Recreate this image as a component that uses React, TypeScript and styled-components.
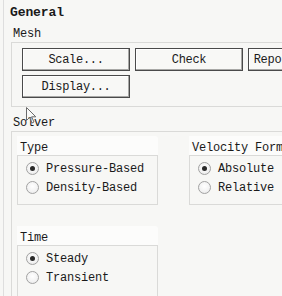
import React from 'react';
import styled, { createGlobalStyle } from 'styled-components';

const GlobalStyle = createGlobalStyle`
  html, body {
    margin: 0;
    padding: 0;
    background: #f7f7f5;
  }
`;

const Page = styled.div`
  position: relative;
  width: 282px;
  height: 296px;
  overflow: hidden;
  background: #f7f7f5;
  font-family: 'Liberation Mono', 'DejaVu Sans Mono', monospace;
  font-size: 12px;
  letter-spacing: -0.2px;
  color: #1a1a1a;
`;

const Panel = styled.div`
  width: 420px;
  min-height: 296px;
  margin-left: 3px;
  padding-left: 7px;
  border-left: 1px solid #dedede;
  box-sizing: border-box;
`;

const Title = styled.div`
  padding-top: 5px;
  margin-left: -1px;
  height: 15px;
  line-height: 15px;
  font-size: 13px;
  font-weight: bold;
  letter-spacing: -0.1px;
`;

const SectionLabel = styled.div<{ $gap: number }>`
  margin-top: ${p => p.$gap}px;
  height: 16px;
  line-height: 14px;
  padding-top: 1px;
  box-sizing: border-box;
  padding-left: 2px;
`;

const GroupBox = styled.div<{ $pad: string }>`
  border: 1px solid #dadad8;
  border-right: none;
  padding: ${p => p.$pad};
`;

const ButtonGrid = styled.div`
  display: grid;
  grid-template-columns: repeat(3, 108px);
  column-gap: 5px;
  row-gap: 4px;
`;

const Button = styled.button`
  height: 23px;
  padding: 0;
  margin: 0;
  background: #f8f8f6;
  border: 1px solid #4a4a4a;
  box-shadow: inset -1px -1px 0 #a8a8a6, inset 1px 1px 0 #ffffff;
  font-family: inherit;
  font-size: 12px;
  letter-spacing: -0.3px;
  color: #1a1a1a;
  text-align: center;
  line-height: 20px;
`;

const Columns = styled.div`
  display: flex;
  gap: 31px;
`;

const SubGroup = styled.div<{ $width?: number; $gap?: number }>`
  width: ${p => (p.$width ? `${p.$width}px` : 'auto')};
  flex: ${p => (p.$width ? 'none' : '1')};
  margin-top: ${p => p.$gap || 0}px;
`;

const SubLabel = styled.div`
  height: 19px;
  line-height: 14px;
  padding: 5px 0 0 3px;
  box-sizing: border-box;
  background: #fcfcfb;
  border-radius: 0 3px 0 0;
  white-space: nowrap;
`;

const SubBox = styled.div<{ $noRight?: boolean; $noBottom?: boolean }>`
  border: 1px solid #dadad8;
  border-right-color: ${p => (p.$noRight ? 'transparent' : '#dadad8')};
  border-bottom-color: ${p => (p.$noBottom ? 'transparent' : '#dadad8')};
  padding: ${p => (p.$noBottom ? '3px 0 20px 8px' : '3px 0 7px 8px')};
`;

const RadioRow = styled.label`
  display: flex;
  align-items: center;
  gap: 7px;
  height: 19px;
  white-space: nowrap;
`;

const RadioDot = styled.span<{ $checked: boolean }>`
  width: 11px;
  height: 11px;
  border-radius: 50%;
  border: 1px solid #a2a2a2;
  background: radial-gradient(circle at 50% 40%, #ffffff 0%, #f2f2f2 60%, #e2e2e2 100%);
  display: flex;
  align-items: center;
  justify-content: center;
  flex: none;

  &::after {
    content: '';
    display: ${p => (p.$checked ? 'block' : 'none')};
    width: 5px;
    height: 5px;
    border-radius: 50%;
    background: #2a2a2a;
  }
`;

const Cursor = styled.svg`
  position: absolute;
  left: 26px;
  top: 107px;
`;

const Radio: React.FC<{ label: string; checked?: boolean }> = ({ label, checked }) => (
  <RadioRow>
    <RadioDot $checked={!!checked} />
    {label}
  </RadioRow>
);

const App: React.FC = () => (
  <Page>
    <GlobalStyle />
    <Panel>
      <Title>General</Title>
      <SectionLabel $gap={6}>Mesh</SectionLabel>
      <GroupBox $pad="5px 0 8px 10px">
        <ButtonGrid>
          <Button>Scale...</Button>
          <Button>Check</Button>
          <Button>Report Quality</Button>
          <Button>Display...</Button>
        </ButtonGrid>
      </GroupBox>
      <SectionLabel $gap={8}>Solver</SectionLabel>
      <GroupBox $pad="4px 0 0 5px">
        <Columns>
          <SubGroup $width={141}>
            <SubLabel>Type</SubLabel>
            <SubBox>
              <Radio label="Pressure-Based" checked />
              <Radio label="Density-Based" />
            </SubBox>
          </SubGroup>
          <SubGroup>
            <SubLabel>Velocity Formulation</SubLabel>
            <SubBox $noRight>
              <Radio label="Absolute" checked />
              <Radio label="Relative" />
            </SubBox>
          </SubGroup>
        </Columns>
        <SubGroup $width={141} $gap={21}>
          <SubLabel>Time</SubLabel>
          <SubBox $noBottom>
            <Radio label="Steady" checked />
            <Radio label="Transient" />
          </SubBox>
        </SubGroup>
      </GroupBox>
    </Panel>
    <Cursor width="12" height="18" viewBox="0 0 12 18">
      <path
        d="M0.5 0.5 L0.5 13.5 L3.5 10.5 L6 16 L8 15 L5.6 9.8 L9.8 9.8 Z"
        fill="rgba(255,255,255,0.35)"
        stroke="#6a6a6a"
        strokeWidth="1"
        strokeLinejoin="round"
      />
    </Cursor>
  </Page>
);

export default App;
